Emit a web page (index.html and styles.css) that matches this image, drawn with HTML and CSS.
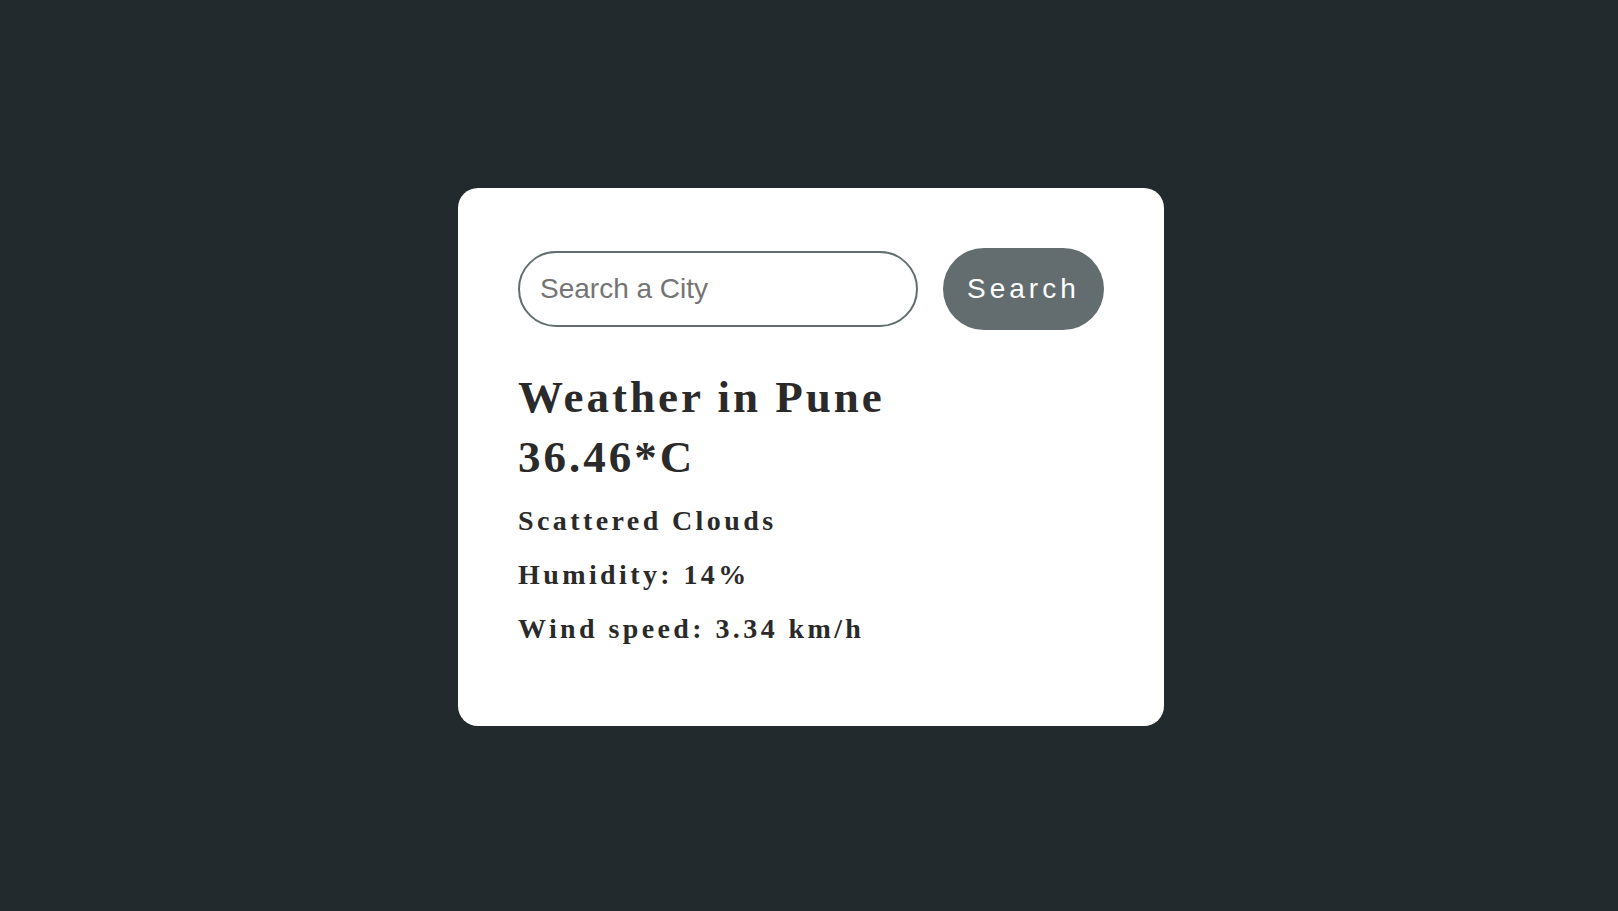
FILE: index.html
```html
<!DOCTYPE html>
<html lang="en">
<head>
<meta charset="utf-8">
<title>Weather</title>
<link rel="stylesheet" href="styles.css">
</head>
<body>
<main class="card">
  <form class="search">
    <input class="search-input" type="text" placeholder="Search a City">
    <button class="search-btn" type="button">Search</button>
  </form>
  <section class="weather">
    <h2 class="city">Weather in Pune</h2>
    <h1 class="temp">36.46*C</h1>
    <div class="line">Scattered Clouds</div>
    <div class="line">Humidity: 14%</div>
    <div class="line last">Wind speed: 3.34 km/h</div>
  </section>
</main>
</body>
</html>
```
FILE: styles.css
```css
* { box-sizing: border-box; }
html, body { height: 100%; }
body {
  margin: 0;
  padding: 3px 0 0 4px;
  background: #222a2d;
  display: flex;
  align-items: center;
  justify-content: center;
  font-family: "Liberation Serif", "Times New Roman", serif;
}
.card {
  background: #ffffff;
  border-radius: 20px;
  padding: 60px;
  width: 706px;
  color: #2a2a2a;
}
.search {
  display: flex;
  align-items: center;
  gap: 25px;
  margin: 0;
}
.search-input {
  width: 400px;
  height: 76px;
  border: 2px solid #636d70;
  border-radius: 38px;
  padding: 0 20px;
  font-family: "Liberation Sans", Arial, sans-serif;
  font-size: 28px;
  color: #333;
  outline: none;
  background: #fff;
}
.search-input::placeholder { color: #747474; }
.search-btn {
  height: 82px;
  padding: 0 24px;
  border: none;
  border-radius: 41px;
  background: #636d70;
  color: #ffffff;
  font-family: "Liberation Sans", Arial, sans-serif;
  font-size: 28px;
  line-height: 32px;
  letter-spacing: 4px;
  cursor: pointer;
}
.weather { margin-top: 37px; }
.city, .temp {
  margin: 0;
  font-size: 45px;
  line-height: 60px;
  font-weight: bold;
  letter-spacing: 3px;
}
.line {
  font-size: 28px;
  line-height: 54px;
  font-weight: bold;
  letter-spacing: 3.4px;
}
.line:first-of-type { margin-top: 7px; }
.last { margin-bottom: 10px; }
```
